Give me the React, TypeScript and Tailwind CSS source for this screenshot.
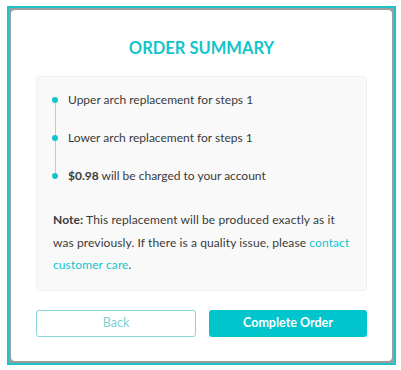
import React from 'react';

const items = [
  { id: 'upper', content: <>Upper arch replacement for steps 1</> },
  { id: 'lower', content: <>Lower arch replacement for steps 1</> },
  {
    id: 'charge',
    content: (
      <>
        <span className="font-bold">$0.98</span> will be charged to your account
      </>
    ),
  },
];

const App = () => {
  return (
    <div className="w-[401px] h-[370px] bg-white overflow-hidden" style={{ fontFamily: 'Lato, "Open Sans", sans-serif' }}>
      <div className="ml-[7px] mt-[6px] w-[389px] h-[359px] border-2 border-[#1ec3c8] bg-[#9c9c9c] p-[2px] flex">
        <div className="flex-1 bg-white rounded-[4px] flex flex-col px-[25px]">
          {/* Title */}
          <h2 className="mt-[26px] text-center text-[16.5px] font-bold text-[#14c4cb] leading-[24px]">
            ORDER SUMMARY
          </h2>

          {/* Summary box */}
          <div className="mt-[16px] bg-[#f9f9f9] border border-[#f0f0f0] rounded-[3px] px-[16px] pt-[12px] pb-[13px]">
            <div className="relative">
              <div className="absolute left-[1.5px] top-[11px] bottom-[11px] w-px bg-[#c8c8c8]" />
              <ul className="flex flex-col gap-[16px]">
                {items.map((item) => (
                  <li key={item.id} className="flex items-center h-[22px]">
                    <span className="relative w-[6px] h-[6px] rounded-full bg-[#14c4cb] -ml-[1px]" />
                    <span className="ml-[10px] text-[12px] text-[#3a3a3a]">{item.content}</span>
                  </li>
                ))}
              </ul>
            </div>

            <p className="mt-[22px] text-[12px] leading-[22.5px] text-[#3a3a3a] tracking-[0.1px]">
              <span className="font-bold">Note:</span> This replacement will be produced exactly as it
              was previously. If there is a quality issue, please{' '}
              <a className="text-[#14c4cb]">contact customer care</a>.
            </p>
          </div>

          {/* Actions */}
          <div className="mt-[19px] flex gap-[13px]">
            <button className="flex-1 h-[27px] rounded-[3px] border border-[#86d5d9] bg-white text-[12.5px] text-[#7fcfd3]">
              Back
            </button>
            <button className="flex-1 h-[27px] rounded-[3px] bg-[#00c5cc] text-[12.5px] font-bold text-white">
              Complete Order
            </button>
          </div>
        </div>
      </div>
    </div>
  );
};

export default App;
